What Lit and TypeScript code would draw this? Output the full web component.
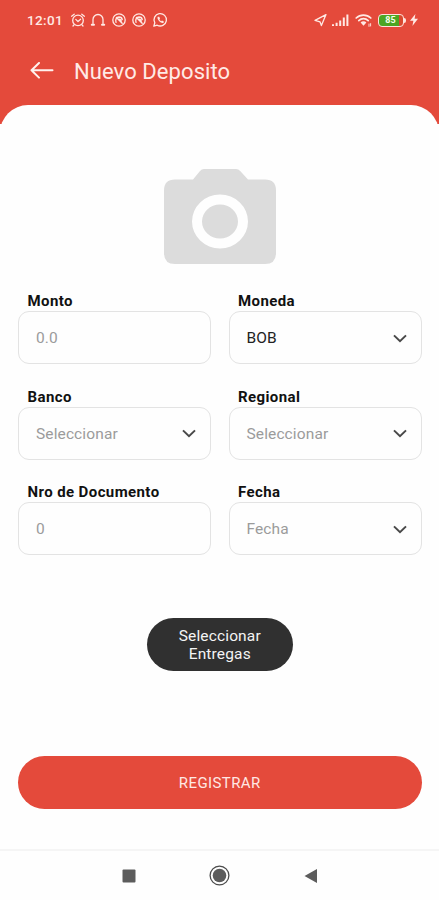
import { LitElement, html, css, svg } from "lit";
import { customElement } from "lit/decorators.js";
import { classMap } from "lit/directives/class-map.js";

interface Field {
  label: string;
  text: string;
  filled?: boolean;
  select?: boolean;
}

const FIELDS: Field[] = [
  { label: "Monto", text: "0.0" },
  { label: "Moneda", text: "BOB", filled: true, select: true },
  { label: "Banco", text: "Seleccionar", select: true },
  { label: "Regional", text: "Seleccionar", select: true },
  { label: "Nro de Documento", text: "0" },
  { label: "Fecha", text: "Fecha", select: true },
];

const mutedCall = svg`
  <circle cx="8" cy="8" r="6.2"/>
  <path d="M5 10.400c-1-3 .6-5.200 3-5.400 1.800 0 3 1 3.200 2.600M5.400 5.400l5.800 5.800M7.400 7.400c1.600-.6 3 .6 2.800 2.400" stroke-width="1.400"/>`;

@customElement("status-bar")
class StatusBar extends LitElement {
  static styles = css`
    :host {
      display: flex;
      align-items: center;
      height: 40px;
      padding: 0 21px 0 27px;
      box-sizing: border-box;
      color: #ffe9e4;
    }
    .time {
      width: 43px;
      font-size: 13.5px;
      font-weight: 500;
      letter-spacing: 0.35px;
    }
    .left,
    .right {
      display: flex;
      align-items: center;
    }
    .left {
      gap: 4.4px;
    }
    .right {
      margin-left: auto;
    }
    svg {
      display: block;
      fill: none;
      stroke: currentColor;
      stroke-width: 1.3;
      stroke-linecap: round;
      stroke-linejoin: round;
    }
    .solid {
      fill: currentColor;
      stroke: none;
    }
    .signal {
      margin-left: 5px;
    }
    .wifi {
      margin-left: 6px;
    }
    .battery {
      display: flex;
      align-items: center;
      margin-left: 6px;
    }
    .cell {
      box-sizing: border-box;
      width: 26px;
      height: 13px;
      border: 1.5px solid #ffe3dc;
      border-radius: 4px;
      background: linear-gradient(90deg, #4da523 82%, #d9482f 82%);
      color: #f4ffe9;
      font-size: 9px;
      font-weight: 700;
      line-height: 11px;
      text-align: center;
    }
    .cap {
      width: 2px;
      height: 5px;
      margin-left: 0.5px;
      border-radius: 0 2px 2px 0;
      background: #ffe3dc;
    }
    .bolt {
      margin-left: 4px;
    }
  `;

  render() {
    return html`
      <span class="time">12:01</span>
      <div class="left">
        <svg width="16" height="16" viewBox="0 0 16 16">
          <circle cx="8" cy="8.4" r="5.3"/>
          <path d="M5.8 7.4 8 9.6l2.6-2.4M1.6 4.2l2.6-2M14.4 4.2l-2.6-2M4 12.8l-1 1.2M12 12.8l1 1.2"/>
        </svg>
        <svg width="16" height="16" viewBox="0 0 16 16">
          <path d="M3 11.600V7.500a5 5 0 0 1 10 0v4.100"/>
          <path d="M1.800 12.800h2.200M12 12.800h2.200" stroke-width="2"/>
        </svg>
        <svg width="16" height="16" viewBox="0 0 16 16">${mutedCall}</svg>
        <svg width="16" height="16" viewBox="0 0 16 16">${mutedCall}</svg>
        <svg width="16" height="16" viewBox="0 0 16 16">
          <path d="M1.8 14.2l1-3.4A6.2 6.2 0 1 1 5.2 13.2z"/>
          <path d="M5.8 4.800c-1.400 1.600 2.200 6.200 4.800 6.200 1 0 1.400-1 1.200-1.600L10 8.400l-.8.900c-.8-.4-1.400-1-1.800-1.800l.6-.8-.7-1.900z" class="solid"/>
        </svg>
      </div>
      <div class="right">
        <svg width="13" height="14" viewBox="0 0 13 14">
          <path d="M1 7.4 12 1.6 7.4 12.6 6 8.8z"/>
        </svg>
        <svg class="signal solid" width="17" height="13" viewBox="0 0 17 13">
          <path d="M0 10.2h2V12H0zM3.6 8.8h2V12h-2zM7.2 6.4h2V12h-2zM10.8 3.4h2V12h-2zM14.4 .6h2V12h-2z"/>
        </svg>
        <svg class="wifi" width="17" height="14" viewBox="0 0 17 14">
          <path d="M1.2 5a10.6 10.6 0 0 1 14.6 0M3.8 7.6a6.8 6.8 0 0 1 9.4 0" stroke-width="1.7"/>
          <path d="M5.6 9.6a4 4 0 0 1 5.8 0L8.5 12.8z" class="solid"/>
          <path d="M14 11v2.4M15.6 10.6V13" stroke-width=".9"/>
        </svg>
        <div class="battery"><span class="cell">85</span><span class="cap"></span></div>
        <svg class="bolt solid" width="8" height="12" viewBox="0 0 8 12">
          <path d="M5.4 0 0 6.8h3.4L2.4 12 8 4.8H4.6z"/>
        </svg>
      </div>
    `;
  }
}

@customElement("form-field")
class FormField extends LitElement {
  static properties = { field: { attribute: false } };
  declare field: Field;

  static styles = css`
    :host {
      display: block;
    }
    .label {
      height: 19px;
      padding-left: 9.5px;
      color: #111;
      font-size: 15px;
      font-weight: 700;
      line-height: 19px;
      letter-spacing: 0.4px;
      white-space: nowrap;
    }
    .box {
      display: flex;
      align-items: center;
      justify-content: space-between;
      box-sizing: border-box;
      height: 53px;
      padding: 1px 14px 0 17px;
      border: 1px solid #e3e3e3;
      border-radius: 11px;
      color: #9b9b9b;
      font-size: 15.5px;
      letter-spacing: 0.12px;
    }
    .filled {
      color: #222;
    }
    svg {
      fill: none;
      stroke: #484848;
      stroke-width: 2;
    }
  `;

  render() {
    const { label, text, filled, select } = this.field;
    return html`
      <div class="label">${label}</div>
      <div class=${classMap({ box: true, filled: !!filled })}>
        <span>${text}</span>
        ${select
          ? html`<svg width="14" height="9" viewBox="0 0 14 9"><path d="M1 1.4 7 7.2l6-5.8"/></svg>`
          : null}
      </div>
    `;
  }
}

@customElement("app-root")
class AppRoot extends LitElement {
  static styles = css`
    :host {
      display: flex;
      flex-direction: column;
      height: 900px;
      overflow: hidden;
      background: linear-gradient(#e44a3b 124px, #fefefe 124px);
      font-family: Roboto, "Liberation Sans", sans-serif;
    }
    .appbar {
      display: flex;
      align-items: center;
      gap: 20px;
      height: 65px;
      padding: 0 0 3px 30px;
      box-sizing: border-box;
      color: #ffeae6;
      font-size: 22px;
      letter-spacing: 0.08px;
    }
    .appbar svg {
      fill: none;
      stroke: #fff2ee;
      stroke-width: 2;
      stroke-linecap: round;
      stroke-linejoin: round;
    }
    .sheet {
      display: flex;
      flex: 1;
      flex-direction: column;
      align-items: center;
      padding: 64px 17.5px 0 18px;
      border-radius: 28px 28px 0 0;
      background: #fefefe;
    }
    .camera {
      fill: #dcdcdc;
    }
    .form {
      display: grid;
      grid-template-columns: 1fr 1fr;
      gap: 23.5px 17.5px;
      align-self: stretch;
      margin-top: 28px;
    }
    .pick,
    .submit {
      border: 0;
      border-radius: 27px;
      font-family: inherit;
      color: #f4f4f4;
    }
    .pick {
      width: 146px;
      height: 53px;
      margin-top: 63px;
      padding: 0 20px;
      background: #303030;
      font-size: 15.5px;
      line-height: 18px;
      letter-spacing: 0.15px;
    }
    .submit {
      align-self: stretch;
      height: 53px;
      margin-top: 85px;
      background: #e44a3b;
      color: #ffe8e4;
      font-size: 15px;
      letter-spacing: 0.4px;
    }
    .nav {
      display: flex;
      align-items: center;
      justify-content: center;
      gap: 73.5px;
      height: 49px;
      border-top: 2px solid #f5f5f5;
      background: #fefefe;
    }
    .nav svg {
      fill: #5c5c5c;
    }
    .nav .ring {
      fill: none;
      stroke: #4c4c4c;
      stroke-width: 1.3;
    }
  `;

  render() {
    return html`
      <status-bar></status-bar>
      <header class="appbar">
        <svg width="24" height="18" viewBox="0 0 24 18">
          <path d="M9 1 1.500 8.300 9 15.600M1.500 8.300H22.500"/>
        </svg>
        <span>Nuevo Deposito</span>
      </header>
      <main class="sheet">
        <svg class="camera" width="112" height="95" viewBox="0 0 112 95">
          <path fill-rule="evenodd" d="M40 0h32q2.500 0 4.200 2L84 10.500h17q11 0 11 11V84q0 11-11 11H11Q0 95 0 84V21.500q0-11 11-11h18L36 2q1.600-2 4-2zM56 25.500a28 27 0 1 0 0 54a28 27 0 1 0 0-54zM56 35.500a18 17 0 1 1 0 34a18 17 0 1 1 0-34z"/>
        </svg>
        <div class="form">
          ${FIELDS.map((f) => html`<form-field .field=${f}></form-field>`)}
        </div>
        <button class="pick">Seleccionar Entregas</button>
        <button class="submit">REGISTRAR</button>
      </main>
      <nav class="nav">
        <svg width="14" height="14" viewBox="0 0 14 14"><rect x=".5" y=".5" width="13" height="13" rx="1"/></svg>
        <svg width="21" height="21" viewBox="0 0 21 21">
          <circle class="ring" cx="10.500" cy="10.500" r="9.400"/><circle cx="10.500" cy="10.500" r="6.800"/>
        </svg>
        <svg width="14" height="14" viewBox="0 0 14 14"><path d="M.5 7 13 0v14z"/></svg>
      </nav>
    `;
  }
}
